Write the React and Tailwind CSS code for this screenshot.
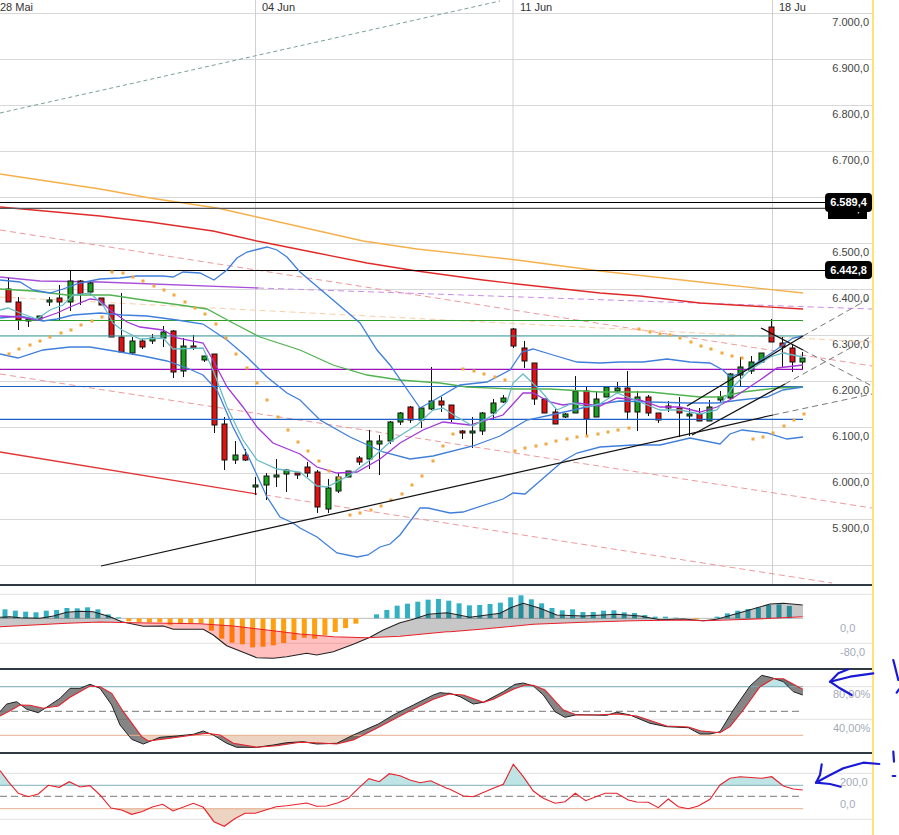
import React from "react";

const p = (pts) => "M" + pts.map(([x, y]) => `${+x.toFixed(1)},${+y.toFixed(1)}`).join("L");
const z4 = (a) => a.map(([x, y]) => [x / 3, 580 + y / 3]);
const z5 = (a) => a.map(([x, y]) => [450 + x / 3, 580 + y / 3]);
const at = (pts, x) => {
  if (x <= pts[0][0]) return pts[0][1];
  for (let i = 1; i < pts.length; i++) {
    if (x <= pts[i][0]) {
      const [a, b] = pts[i - 1];
      const [c, d] = pts[i];
      return b + ((d - b) * (x - a)) / (c - a || 1);
    }
  }
  return pts[pts.length - 1][1];
};
const xs = Array.from({ length: 804 }, (_, i) => i);
const between = (a, b, test) => {
  let out = "";
  let run = [];
  const flush = () => {
    if (run.length > 1) {
      const top = run.map((x) => [x, at(a, x)]);
      const bot = run.slice().reverse().map((x) => [x, at(b, x)]);
      out += p([...top, ...bot]) + "Z";
    }
    run = [];
  };
  xs.forEach((x) => {
    if (test(at(a, x), at(b, x))) run.push(x);
    else flush();
  });
  flush();
  return out;
};
const band = (a, level, sign) => {
  const top = xs.map((x) => {
    const y = at(a, x);
    return [x, sign > 0 ? Math.max(y, level) : Math.min(y, level)];
  });
  return p([[0, level], ...top, [803, level]]) + "Z";
};

/* [colour, wickTop, bodyTop, bodyBottom, wickBottom] */
const candles = [
  ["r",278,289,302,302],["r",297,302,320,330],["g",318,319,321,327],["g",316,316,319,319],["g",297,300,302,306],
  ["r",285,298,302,320],["g",271,281,302,311],["r",280,281,294,305],["g",282,283,292,295],["r",298,298,305,305],
  ["r",305,305,337,337],["r",293,337,352,352],["g",337,341,353,355],["r",339,341,347,349],["g",334,338,341,344],
  ["g",326,332,338,347],["r",330,331,372,378],["g",338,346,371,377],["r",335,346,348,350],["g",356,356,360,362],
  ["r",354,354,425,433],["r",417,424,460,470],["g",441,455,460,464],["r",449,455,460,461],["g",477,485,487,495],
  ["g",473,476,485,500],["g",459,475,477,487],["g",469,470,474,492],["r",473,473,475,479],["r",462,467,473,477],
  ["r",470,472,507,513],["g",479,488,509,513],["g",473,477,491,493],["g",471,471,477,477],["r",456,458,462,465],
  ["g",430,441,459,469],["g",435,441,444,475],["g",421,422,441,444],["g",412,413,422,425],["r",406,407,420,423],
  ["g",407,408,420,428],["g",367,401,409,410],["r",397,401,405,412],["r",405,405,419,422],["r",430,431,433,439],
  ["g",417,431,433,448],["g",412,413,431,435],["g",399,403,413,419],["g",395,398,402,403],["r",328,329,346,348],
  ["r",341,348,361,368],["r",363,363,399,405],["r",399,399,413,413],["r",409,412,424,424],["g",413,414,417,418],
  ["g",376,391,413,413],["r",387,391,419,436],["g",392,399,417,417],["g",387,387,397,397],["g",382,388,391,393],
  ["r",371,388,412,419],["g",391,397,412,431],["r",395,397,413,416],["r",413,413,420,423],["r",401,406,408,412],
  ["r",397,408,413,437],["g",408,414,416,436],["r",408,414,421,421],["g",400,407,421,421],["g",391,397,400,402],
  ["g",373,374,398,400],["g",357,367,375,386],["g",356,362,371,374],["g",353,353,362,362],["r",319,327,342,342],
  ["r",337,343,347,368],["r",345,348,362,372],["g",352,358,362,370],
];

const sar = [
  [9,354],[19,349],[30,345],[40,341],[50,337],[61,333],[71,330],[81,325],[92,321],[102,317],[112,272],[123,273],
  [133,277],[143,281],[154,286],[164,290],[174,295],[185,302],[195,308],[205,314],[216,324],[226,338],[236,354],
  [247,368],[257,383],[267,400],[278,417],[288,430],[298,442],[308,451],[319,461],[329,471],[339,478],[350,515],
  [360,513],[371,510],[381,506],[391,500],[402,494],[412,485],[422,476],[433,461],[443,446],[453,434],[463,369],
  [474,371],[484,374],[495,377],[505,380],[515,451],[525,448],[536,446],[546,444],[556,441],[567,439],[577,437],
  [587,436],[598,434],[608,432],[618,430],[629,428],[639,329],[650,332],[660,334],[670,335],[680,338],[691,342],
  [701,346],[711,349],[722,353],[732,356],[742,358],[753,439],[763,437],[773,433],[784,426],[794,420],[804,414],
];

const upper = [[0,280],[20,282],[33,290],[50,293],[63,289],[80,283],[100,279],[120,278],[137,276],[163,276],[173,277],[183,272],[200,273],[214,280],[227,270],[237,258],[247,252],[267,247],[277,250],[287,257],[300,272],[333,300],[360,323],[377,350],[390,365],[420,408],[431,402],[460,385],[487,382],[510,370],[522,352],[533,349],[553,355],[577,362],[600,363],[620,362],[643,362],[667,359],[690,362],[710,363],[723,370],[730,377],[743,372],[773,352],[793,338],[803,336]];
const middle = [[0,318],[20,316],[43,321],[57,319],[73,315],[100,313],[123,315],[147,316],[177,320],[203,324],[227,340],[247,357],[267,377],[287,393],[300,400],[320,420],[350,437],[383,452],[410,459],[433,456],[473,446],[500,436],[527,420],[560,413],[600,404],[620,401],[650,402],[687,403],[717,403],[740,400],[767,397],[783,390],[803,387]];
const lower = [[0,354],[18,358],[43,350],[70,347],[90,347],[120,352],[143,356],[167,361],[187,368],[203,375],[217,390],[233,427],[250,460],[267,497],[280,517],[293,523],[300,528],[317,537],[337,553],[357,557],[368,555],[380,547],[390,544],[400,535],[420,508],[428,508],[450,513],[463,512],[503,499],[513,493],[525,494],[563,461],[577,453],[600,447],[633,445],[660,445],[690,438],[720,444],[730,434],[742,430],[767,433],[787,439],[803,437]];
const purple = [[0,316],[20,317],[37,320],[57,313],[70,307],[90,299],[100,300],[110,310],[127,322],[140,327],[163,330],[177,338],[203,343],[213,360],[227,387],[243,407],[257,427],[273,443],[300,454],[317,467],[337,473],[357,472],[380,459],[400,443],[423,430],[443,422],[470,425],[503,415],[523,393],[533,393],[550,402],[563,405],[577,403],[600,406],[617,398],[640,400],[660,407],[680,407],[700,412],[717,407],[733,398],[760,380],[777,368],[803,365]];
const teal = [[0,310],[8,308],[20,313],[37,319],[50,310],[63,305],[73,295],[90,293],[103,305],[113,323],[122,330],[140,339],[163,338],[173,349],[203,348],[213,370],[227,407],[243,440],[257,460],[277,469],[300,472],[317,486],[327,487],[350,475],[370,460],[390,442],[417,425],[433,410],[443,408],[457,417],[473,426],[493,415],[507,402],[513,383],[523,374],[540,390],[557,410],[573,403],[587,407],[600,404],[617,393],[640,402],[660,410],[680,410],[700,414],[717,410],[733,387],[750,370],[770,357],[783,353],[803,357]];
const green = [[0,289],[33,291],[67,295],[110,295],[150,301],[180,305],[207,309],[233,323],[260,337],[300,350],[333,365],[367,375],[400,380],[440,383],[467,387],[513,389],[550,389],[600,392],[650,392],[700,397],[720,397],[743,392],[777,388],[803,387]];
const orange = [[0,174],[100,189],[150,198],[217,208],[257,217],[310,229],[363,241],[417,249],[517,260],[600,271],[700,282],[803,293]];
const red = [[0,207],[100,216],[150,222],[213,231],[257,241],[317,253],[367,263],[417,271],[483,280],[517,284],[600,293],[640,296],[700,303],[803,309]];

const macdTops = [88,92,95,97,92,90,84,85,82,88,103,112,124,126,127,127,134,132,130,130,152,176,188,193,202,200,196,189,180,173,176,166,156,144,131,115,103,90,77,71,65,59,57,62,70,76,75,72,68,52,46,58,70,84,91,88,96,96,92,91,97,99,105,110,110,113,115,118,115,110,100,92,87,82,75,73,78];
const macd = [
  ...z4([[0,112],[30,110],[60,113],[120,115],[160,108],[200,97],[240,94],[280,95],[330,110],[365,125],[430,139],[490,138],[520,148],[610,148],[640,165],[680,197],[720,213],[770,233],[820,235],[860,230],[920,220],[950,225],[1000,215],[1060,193],[1110,172],[1150,150],[1200,128],[1240,118],[1285,103],[1340,98]]),
  ...z5([[0,100],[60,112],[150,100],[185,82],[220,70],[270,85],[320,105],[400,108],[500,103],[570,108],[630,119],[700,117],[760,122],[800,118],[880,95],[960,72],[1000,70],[1058,75]]),
];
const signal = [
  ...z4([[0,140],[100,135],[200,130],[300,126],[400,128],[500,130],[600,131],[700,138],[800,150],[900,162],[1000,170],[1100,173],[1200,169],[1340,155]]),
  ...z5([[0,155],[100,147],[250,133],[400,127],[550,122],[700,120],[760,122],[900,118],[1058,110]]),
];
const stochK = [
  ...z4([[0,395],[20,372],[50,365],[80,388],[115,398],[150,375],[180,355],[210,325],[240,325],[270,313],[300,325],[335,375],[360,435],[395,478],[430,492],[480,472],[530,468],[580,463],[610,453],[640,465],[680,490],[710,502],[770,502],[820,495],[860,488],[910,485],[950,492],[1010,490],[1060,465],[1135,432],[1180,405],[1240,375],[1300,345],[1320,338],[1340,340]]),
  ...z5([[0,340],[30,350],[70,372],[100,367],[160,335],[195,313],[220,309],[250,318],[280,345],[315,395],[345,412],[380,404],[470,406],[500,397],[540,405],[600,430],[650,440],[715,443],[750,462],[780,462],[810,455],[850,390],[900,318],[935,286],[965,293],[1000,305],[1030,335],[1058,345]]),
];
const stochD = [
  ...z4([[0,408],[30,392],[60,375],[90,376],[130,385],[175,378],[210,352],[270,318],[300,320],[335,340],[370,395],[425,470],[445,483],[500,476],[580,465],[620,460],[660,465],[700,490],[770,502],[830,497],[900,487],[960,489],[1010,492],[1060,480],[1130,445],[1230,392],[1300,358],[1340,344]]),
  ...z5([[0,342],[40,345],[100,367],[130,358],[190,328],[225,315],[250,316],[285,330],[340,390],[380,405],[450,404],[500,402],[560,408],[650,438],[715,441],[750,452],[810,458],[840,440],[880,390],[930,320],[970,296],[1000,296],[1058,328]]),
];
const cci = [
  ...z4([[0,572],[25,605],[55,640],[85,650],[115,642],[145,616],[178,622],[208,605],[240,621],[270,617],[300,645],[333,684],[365,690],[395,703],[425,695],[457,681],[488,673],[519,693],[580,670],[610,682],[642,725],[673,739],[704,716],[735,700],[766,700],[797,690],[828,680],[860,677],[920,669],[950,679],[980,678],[1015,668],[1045,655],[1075,625],[1107,596],[1138,605],[1168,581],[1200,587],[1230,600],[1260,608],[1292,602],[1340,625]]),
  ...z5([[0,628],[40,648],[70,650],[130,625],[160,613],[190,553],[220,590],[250,633],[280,655],[315,670],[345,665],[376,640],[407,662],[465,640],[500,640],[535,660],[560,666],[595,667],[625,683],[655,657],[685,680],[715,686],[745,678],[780,658],[810,615],[840,595],[870,590],[935,595],[965,590],[1000,618],[1030,627],[1058,630]]),
];

const priceLabels = ["7.000,0","6.900,0","6.800,0","6.700,0",null,"6.500,0","6.400,0","6.300,0","6.200,0","6.100,0","6.000,0","5.900,0"];
const hLines = [
  [320.5,"#2b9e2b"],[336,"#3f9fa6"],[369.3,"#9a12b8"],[386.5,"#1d60c8"],[419.3,"#1d60c8"],
];

function Panel({ top, height, className, children }) {
  return (
    <div className={className}>
      <svg className="block w-full" height={height} viewBox={`0 ${top} 872 ${height}`}>
        {children}
      </svg>
    </div>
  );
}

function Tag({ children, className }) {
  return (
    <div className={`absolute flex items-center justify-center overflow-hidden bg-black text-[11px] font-bold text-white ${className}`}>
      {children}
    </div>
  );
}

export default function App() {
  const zero = 580 + 115 / 3;
  return (
    <div className="relative flex h-[835px] w-[899px] overflow-hidden bg-white font-['Liberation_Sans',Arial,sans-serif]">
      <div className="relative flex h-full w-[874px] flex-col border-r-2 border-[#ffe27a]">
        <Panel top={0} height={584}>
          {Array.from({ length: 13 }, (_, i) => (
            <line key={i} x1="0" x2="872" y1={13.5 + 46 * i} y2={13.5 + 46 * i} stroke="#d8d8d8" />
          ))}
          {[255.5, 513, 772.5].map((x) => (
            <line key={x} x1={x} x2={x} y1="0" y2="584" stroke="#d0d0d0" />
          ))}
          {[["28 Mai",0],["04 Jun",262],["11 Jun",520],["18 Ju",779]].map(([t, x]) => (
            <text key={t} x={x} y="11" fontSize="11" fill="#333">{t}</text>
          ))}
          {priceLabels.map((t, i) =>
            t ? (
              <text key={t} x="869" y={26 + 46 * i} textAnchor="end" fontSize="11" fill="#444">{t}</text>
            ) : null
          )}

          <line x1="0" y1="113" x2="500" y2="1" stroke="#7c9f9f" strokeDasharray="4 3" />
          <line x1="0" y1="230" x2="872" y2="366" stroke="#ee9a9a" strokeDasharray="6 4" />
          <line x1="0" y1="374" x2="872" y2="508" stroke="#ee9a9a" strokeDasharray="6 4" />
          <line x1="265" y1="495" x2="832" y2="583" stroke="#ee9a9a" strokeDasharray="6 4" />
          <line x1="0" y1="297" x2="872" y2="342" stroke="#f8cfa8" strokeDasharray="6 4" />
          <path d={p([[0,277],[40,281],[100,282],[258,288]])} fill="none" stroke="#a84fd8" strokeWidth="1.4" />
          <line x1="258" y1="288" x2="872" y2="309" stroke="#c98de4" strokeDasharray="6 4" />

          <path d={p(orange)} fill="none" stroke="#f5b04a" strokeWidth="1.3" />
          <path d={p(red)} fill="none" stroke="#e02a2a" strokeWidth="1.3" />
          <line x1="0" y1="452" x2="257" y2="494" stroke="#e23535" strokeWidth="1.3" />

          {candles.map(([c, wt, bt, bb, wb], i) => {
            const x = Math.round(7.7 + 10.32 * i) + 0.5;
            return (
              <g key={i}>
                <line x1={x} x2={x} y1={wt} y2={wb} stroke="#111" />
                <rect x={x - 2.5} y={bt} width="5" height={Math.max(bb - bt, 1.5)} fill={c === "r" ? "#e21010" : "#16a01c"} stroke="#111" />
              </g>
            );
          })}

          <line x1="0" x2="872" y1="202.5" y2="202.5" stroke="#000" strokeWidth="1.2" />
          <line x1="0" x2="872" y1="208.3" y2="208.3" stroke="#555" strokeWidth="1.2" />
          <line x1="0" x2="872" y1="270.5" y2="270.5" stroke="#000" strokeWidth="1.2" />
          {hLines.map(([y, c]) => (
            <line key={y} x1="0" x2="803" y1={y} y2={y} stroke={c} strokeWidth="1.2" />
          ))}

          <path d={p(green)} fill="none" stroke="#4fb34f" strokeWidth="1.3" />
          <path d={p(upper)} fill="none" stroke="#3f7fdc" strokeWidth="1.3" />
          <path d={p(middle)} fill="none" stroke="#3f7fdc" strokeWidth="1.3" />
          <path d={p(lower)} fill="none" stroke="#3f7fdc" strokeWidth="1.3" />
          <path d={p(purple)} fill="none" stroke="#a238d8" strokeWidth="1.3" />
          <path d={p(teal)} fill="none" stroke="#68bcc8" strokeWidth="1.3" />

          {sar.map(([x, y], i) => (
            <rect key={i} x={x - 1.5} y={y - 1.5} width="3" height="3" fill="#f2a740" />
          ))}

          <line x1="101" y1="566" x2="773" y2="415" stroke="#111" strokeWidth="1.2" />
          <line x1="773" y1="415" x2="872" y2="394" stroke="#777" strokeDasharray="6 4" />
          <line x1="692" y1="435" x2="785" y2="384" stroke="#111" strokeWidth="1.3" />
          <line x1="785" y1="384" x2="872" y2="336" stroke="#777" strokeDasharray="6 4" />
          <line x1="687" y1="406" x2="803" y2="336" stroke="#111" strokeWidth="1.3" />
          <line x1="803" y1="336" x2="872" y2="297" stroke="#777" strokeDasharray="6 4" />
          <line x1="761" y1="328" x2="803" y2="350" stroke="#111" strokeWidth="1.3" />
          <line x1="803" y1="350" x2="872" y2="386" stroke="#777" strokeDasharray="6 4" />
        </Panel>

        <Panel top={586} height={82} className="border-t-2 border-[#2e3a42]">
          <line x1="0" x2="872" y1="594.3" y2="594.3" stroke="#e2e2e2" />
          <line x1="0" x2="872" y1="643.3" y2="643.3" stroke="#e2e2e2" />
          <line x1="0" x2="803" y1={zero} y2={zero} stroke="#bbb" />
          {macdTops.map((z, i) => {
            const y = 580 + z / 3;
            const x = 5 + 10.32 * i - 2.5;
            return y < zero ? (
              <rect key={i} x={x} y={y} width="5" height={zero - y} fill="#33b1c2" />
            ) : (
              <rect key={i} x={x} y={zero} width="5" height={y - zero} fill="#ffa010" />
            );
          })}
          <path d={between(macd, signal, (a, b) => a <= b)} fill="#000" fillOpacity="0.22" />
          <path d={between(macd, signal, (a, b) => a > b)} fill="#f00" fillOpacity="0.25" />
          <path d={p(macd)} fill="none" stroke="#222" strokeWidth="1.1" />
          <path d={p(signal)} fill="none" stroke="#e8202a" strokeWidth="1.1" />
          <text x="840" y="632" fontSize="11" fill="#a4abb8">0,0</text>
          <text x="840" y="656" fontSize="11" fill="#a4abb8">-80,0</text>
        </Panel>

        <Panel top={670} height={82} className="border-t-2 border-[#2e3a42]">
          <line x1="0" x2="872" y1="686.7" y2="686.7" stroke="#e2e2e2" />
          <line x1="0" x2="872" y1="719.3" y2="719.3" stroke="#e2e2e2" />
          <path d={band(stochD, 686.7, -1)} fill="#bfe4e6" />
          <path d={band(stochD, 735.3, 1)} fill="#ecd3c2" />
          <path d={between(stochK, stochD, () => true)} fill="#000" fillOpacity="0.48" />
          <line x1="0" x2="803" y1="686.7" y2="686.7" stroke="#7cb0b8" />
          <line x1="0" x2="803" y1="735.3" y2="735.3" stroke="#e6ae8e" />
          <line x1="0" x2="803" y1="711.3" y2="711.3" stroke="#777" strokeDasharray="7 4" />
          <path d={p(stochK)} fill="none" stroke="#222" strokeWidth="1" />
          <path d={p(stochD)} fill="none" stroke="#e8202a" strokeWidth="1.1" />
          <text x="833" y="698" fontSize="11" fill="#a4abb8">80,00%</text>
          <text x="833" y="732" fontSize="11" fill="#a4abb8">40,00%</text>
        </Panel>

        <Panel top={754} height={81} className="border-t-2 border-[#2e3a42]">
          <line x1="0" x2="872" y1="773.3" y2="773.3" stroke="#e2e2e2" />
          <line x1="0" x2="872" y1="819.3" y2="819.3" stroke="#e2e2e2" />
          <path d={band(cci, 785.3, -1)} fill="#bfe4e6" />
          <path d={band(cci, 808.7, 1)} fill="#ecd3c2" />
          <line x1="0" x2="803" y1="785.3" y2="785.3" stroke="#7cb0b8" />
          <line x1="0" x2="803" y1="808.7" y2="808.7" stroke="#e6ae8e" />
          <line x1="0" x2="803" y1="796.3" y2="796.3" stroke="#777" strokeDasharray="7 4" />
          <path d={p(cci)} fill="none" stroke="#e8202a" strokeWidth="1.1" />
          <text x="840" y="786" fontSize="11" fill="#a4abb8">200,0</text>
          <text x="840" y="808" fontSize="11" fill="#a4abb8">0,0</text>
        </Panel>

        <Tag className="left-[828px] top-[204px] h-[15px] w-[39px] pb-[6px]">6.577,1</Tag>
        <Tag className="left-[825px] top-[193px] h-[19px] w-[47px] rounded">6.589,4</Tag>
        <Tag className="left-[825px] top-[261px] h-[18px] w-[47px] rounded">6.442,8</Tag>
      </div>

      <svg className="pointer-events-none absolute inset-0" width="899" height="835" viewBox="0 0 899 835">
        <g fill="none" stroke="#1a1ad6" strokeWidth="2.2" strokeLinecap="round" strokeLinejoin="round">
          <path d={p(z5([[1270,280],[1200,290],[1140,305]]))} />
          <path d={p(z5([[1195,268],[1165,280],[1140,305],[1170,325],[1205,345]]))} />
          <path d={p(z5([[1330,240],[1345,300]]))} />
          <path d={p(z5([[1340,338],[1347,328]]))} />
          <path d={p(z5([[1288,552],[1240,548],[1180,565],[1130,590],[1098,608]]))} />
          <path d={p(z5([[1115,553],[1110,585],[1098,608],[1140,612],[1172,620]]))} />
          <path d={p(z5([[1330,515],[1332,545]]))} />
          <path d={p(z5([[1328,588],[1336,588]]))} />
        </g>
      </svg>
    </div>
  );
}
